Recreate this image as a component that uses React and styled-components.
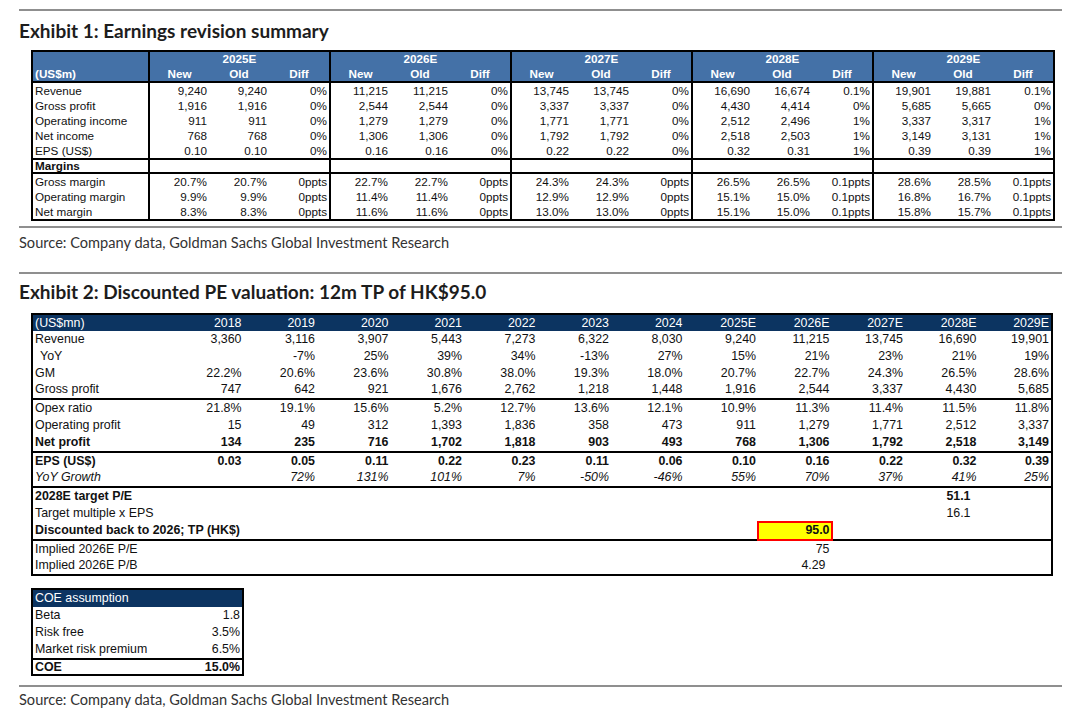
import React from 'react';
import styled, { createGlobalStyle } from 'styled-components';

const Global = createGlobalStyle`
  html, body { margin: 0; padding: 0; background: #fff; }
  body { font-family: "Liberation Sans", Arial, sans-serif; }
`;

const Page = styled.div`
  width: 1080px;
  height: 717px;
  box-sizing: border-box;
  padding: 9px 0 0 19px;
  display: flex;
  flex-direction: column;
  align-items: flex-start;
  overflow: hidden;
`;

const Rule = styled.div`
  width: 1043px;
  height: 2px;
  background: #8f8f8f;
  margin-top: ${p => p.$mt || 0}px;
`;

const Title = styled.h2`
  margin: ${p => p.$mt}px 0 0;
  font-family: Lato, "Open Sans", sans-serif;
  font-weight: 700;
  font-size: 19px;
  line-height: 22px;
  color: #1d1d1d;
`;

const Source = styled.div`
  margin-top: ${p => p.$mt}px;
  font-family: Lato, "Open Sans", sans-serif;
  font-size: 14.6px;
  line-height: 18px;
  color: #333;
`;

const Table = styled.table`
  border-collapse: collapse;
  table-layout: fixed;
  width: ${p => p.$w}px;
  margin: ${p => p.$mt}px 0 0 12px;
  border: 2px solid #000;
  font-family: "Liberation Sans", Arial, sans-serif;
  font-size: ${p => p.$fs}px;
  color: #111;
`;

const HeadCell = styled.th`
  background: ${p => (p.$navy ? '#0c3461' : '#4471a7')};
  color: #fff;
  font-weight: ${p => (p.$navy ? 400 : 700)};
  text-align: ${p => p.$align || 'center'};
  vertical-align: bottom;
  padding: 0 2px;
  height: ${p => p.$h}px;
  line-height: ${p => p.$h}px;
  white-space: nowrap;
  border-right: ${p => (p.$sep ? '2px solid #000' : 'none')};
  border-bottom: ${p => (p.$under ? '2px solid #000' : 'none')};
`;

const Cell = styled.td`
  padding: 0 ${p => p.$pr ?? 2}px 0 ${p => p.$pl ?? 2}px;
  height: ${p => p.$h}px;
  line-height: ${p => p.$h}px;
  white-space: nowrap;
  overflow: visible;
  text-align: ${p => (p.$label ? 'left' : 'right')};
  font-weight: ${p => (p.$bold ? 700 : 400)};
  font-style: ${p => (p.$italic ? 'italic' : 'normal')};
  border-right: ${p => (p.$sep ? '2px solid #000' : 'none')};
  border-top: ${p => (p.$top ? '2px solid #000' : 'none')};
  border-bottom: ${p => (p.$bottom ? '2px solid #000' : 'none')};
  background: ${p => (p.$hl ? '#ffff00' : 'transparent')};
  outline: ${p => (p.$hl ? '2px solid #ff0000' : 'none')};
  outline-offset: -1px;
`;

/* ---------- Exhibit 1 data ---------- */
const years1 = ['2025E', '2026E', '2027E', '2028E', '2029E'];
const rows1 = [
  ['Revenue', [['9,240', '9,240', '0%'], ['11,215', '11,215', '0%'], ['13,745', '13,745', '0%'], ['16,690', '16,674', '0.1%'], ['19,901', '19,881', '0.1%']]],
  ['Gross profit', [['1,916', '1,916', '0%'], ['2,544', '2,544', '0%'], ['3,337', '3,337', '0%'], ['4,430', '4,414', '0%'], ['5,685', '5,665', '0%']]],
  ['Operating income', [['911', '911', '0%'], ['1,279', '1,279', '0%'], ['1,771', '1,771', '0%'], ['2,512', '2,496', '1%'], ['3,337', '3,317', '1%']]],
  ['Net income', [['768', '768', '0%'], ['1,306', '1,306', '0%'], ['1,792', '1,792', '0%'], ['2,518', '2,503', '1%'], ['3,149', '3,131', '1%']]],
  ['EPS (US$)', [['0.10', '0.10', '0%'], ['0.16', '0.16', '0%'], ['0.22', '0.22', '0%'], ['0.32', '0.31', '1%'], ['0.39', '0.39', '1%']]],
];
const margins1 = [
  ['Gross margin', [['20.7%', '20.7%', '0ppts'], ['22.7%', '22.7%', '0ppts'], ['24.3%', '24.3%', '0ppts'], ['26.5%', '26.5%', '0.1ppts'], ['28.6%', '28.5%', '0.1ppts']]],
  ['Operating margin', [['9.9%', '9.9%', '0ppts'], ['11.4%', '11.4%', '0ppts'], ['12.9%', '12.9%', '0ppts'], ['15.1%', '15.0%', '0.1ppts'], ['16.8%', '16.7%', '0.1ppts']]],
  ['Net margin', [['8.3%', '8.3%', '0ppts'], ['11.6%', '11.6%', '0ppts'], ['13.0%', '13.0%', '0ppts'], ['15.1%', '15.0%', '0.1ppts'], ['15.8%', '15.7%', '0.1ppts']]],
];

const H1 = 15;

function Exhibit1Row({ label, groups }) {
  return (
    <tr>
      <Cell $label $sep $h={H1}>{label}</Cell>
      {groups.map((g, gi) =>
        g.map((v, i) => (
          <Cell key={`${gi}-${i}`} $h={H1} $sep={i === 2}>{v}</Cell>
        ))
      )}
    </tr>
  );
}

function Exhibit1() {
  return (
    <Table $w={1022} $mt={8} $fs={11.7}>
      <colgroup>
        <col style={{ width: 117 }} />
        {years1.map(y => (
          <React.Fragment key={y}>
            <col style={{ width: 60 }} />
            <col style={{ width: 60 }} />
            <col style={{ width: 61 }} />
          </React.Fragment>
        ))}
      </colgroup>
      <thead>
        <tr>
          <HeadCell rowSpan={2} $align="left" $sep $under $h={14}>(US$m)</HeadCell>
          {years1.map(y => (
            <HeadCell key={y} colSpan={3} $sep $h={14}>{y}</HeadCell>
          ))}
        </tr>
        <tr>
          {years1.map(y => (
            <React.Fragment key={y}>
              <HeadCell $under $h={H1}>New</HeadCell>
              <HeadCell $under $h={H1}>Old</HeadCell>
              <HeadCell $under $sep $h={H1}>Diff</HeadCell>
            </React.Fragment>
          ))}
        </tr>
      </thead>
      <tbody>
        {rows1.map(([l, g]) => (
          <Exhibit1Row key={l} label={l} groups={g} />
        ))}
        <tr>
          <Cell $label $bold $sep $top $bottom $h={12}>Margins</Cell>
          {years1.map(y => (
            <React.Fragment key={y}>
              <Cell $top $bottom $h={12} />
              <Cell $top $bottom $h={12} />
              <Cell $top $bottom $sep $h={12} />
            </React.Fragment>
          ))}
        </tr>
        {margins1.map(([l, g]) => (
          <Exhibit1Row key={l} label={l} groups={g} />
        ))}
      </tbody>
    </Table>
  );
}

/* ---------- Exhibit 2 data ---------- */
const years2 = ['2018', '2019', '2020', '2021', '2022', '2023', '2024', '2025E', '2026E', '2027E', '2028E', '2029E'];
const E = (n, v) => {
  const a = Array(12).fill('');
  a[n] = v;
  return a;
};
const rows2 = [
  { label: 'Revenue', vals: ['3,360', '3,116', '3,907', '5,443', '7,273', '6,322', '8,030', '9,240', '11,215', '13,745', '16,690', '19,901'] },
  { label: 'YoY', indent: true, vals: ['', '-7%', '25%', '39%', '34%', '-13%', '27%', '15%', '21%', '23%', '21%', '19%'] },
  { label: 'GM', vals: ['22.2%', '20.6%', '23.6%', '30.8%', '38.0%', '19.3%', '18.0%', '20.7%', '22.7%', '24.3%', '26.5%', '28.6%'] },
  { label: 'Gross profit', bottom: true, vals: ['747', '642', '921', '1,676', '2,762', '1,218', '1,448', '1,916', '2,544', '3,337', '4,430', '5,685'] },
  { label: 'Opex ratio', vals: ['21.8%', '19.1%', '15.6%', '5.2%', '12.7%', '13.6%', '12.1%', '10.9%', '11.3%', '11.4%', '11.5%', '11.8%'] },
  { label: 'Operating profit', vals: ['15', '49', '312', '1,393', '1,836', '358', '473', '911', '1,279', '1,771', '2,512', '3,337'] },
  { label: 'Net profit', bold: true, bottom: true, vals: ['134', '235', '716', '1,702', '1,818', '903', '493', '768', '1,306', '1,792', '2,518', '3,149'] },
  { label: 'EPS (US$)', bold: true, vals: ['0.03', '0.05', '0.11', '0.22', '0.23', '0.11', '0.06', '0.10', '0.16', '0.22', '0.32', '0.39'] },
  { label: 'YoY Growth', italic: true, bottom: true, vals: ['', '72%', '131%', '101%', '7%', '-50%', '-46%', '55%', '70%', '37%', '41%', '25%'] },
  { label: '2028E target P/E', bold: true, vals: E(10, '51.1'), pr: 8 },
  { label: 'Target multiple x EPS', vals: E(10, '16.1'), pr: 8 },
  { label: 'Discounted back to 2026; TP (HK$)', bold: true, bottom: true, vals: E(8, '95.0'), hl: 8 },
  { label: 'Implied 2026E P/E', vals: E(8, '75') },
  { label: 'Implied 2026E P/B', vals: E(8, '4.29'), pr: 6 },
];

const H2 = 16.8;

function Exhibit2() {
  return (
    <Table $w={1022} $mt={10} $fs={12.4}>
      <colgroup>
        <col style={{ width: 138 }} />
        {years2.map(y => <col key={y} />)}
      </colgroup>
      <thead>
        <tr>
          <HeadCell $navy $align="left" $h={16}>(US$mn)</HeadCell>
          {years2.map(y => (
            <HeadCell key={y} $navy $align="right" $h={16}>{y}</HeadCell>
          ))}
        </tr>
      </thead>
      <tbody>
        {rows2.map(r => (
          <tr key={r.label}>
            <Cell $label $h={H2} $pl={r.indent ? 7 : 2} $bold={r.bold} $italic={r.italic} $bottom={r.bottom}>
              {r.label}
            </Cell>
            {r.vals.map((v, i) => (
              <Cell
                key={i}
                $h={H2}
                $bold={r.bold}
                $italic={r.italic}
                $bottom={r.bottom}
                $hl={r.hl === i}
                $pr={v && r.pr ? r.pr : 2}
              >
                {v}
              </Cell>
            ))}
          </tr>
        ))}
      </tbody>
    </Table>
  );
}

/* ---------- COE ---------- */
const coe = [
  ['Beta', '1.8'],
  ['Risk free', '3.5%'],
  ['Market risk premium', '6.5%'],
];

function CoeTable() {
  return (
    <Table $w={213} $mt={12} $fs={12.4}>
      <colgroup>
        <col style={{ width: 150 }} />
        <col />
      </colgroup>
      <thead>
        <tr>
          <HeadCell $navy $align="left" colSpan={2} $h={17}>COE assumption</HeadCell>
        </tr>
      </thead>
      <tbody>
        {coe.map(([l, v]) => (
          <tr key={l}>
            <Cell $label $h={17}>{l}</Cell>
            <Cell $h={17}>{v}</Cell>
          </tr>
        ))}
        <tr>
          <Cell $label $bold $top $h={14}>COE</Cell>
          <Cell $bold $top $h={14}>15.0%</Cell>
        </tr>
      </tbody>
    </Table>
  );
}

export default function App() {
  return (
    <>
      <Global />
      <Page>
        <Rule />
        <Title $mt={9}>Exhibit 1: Earnings revision summary</Title>
        <Exhibit1 />
        <Rule $mt={5} />
        <Source $mt={6}>Source: Company data, Goldman Sachs Global Investment Research</Source>
        <Rule $mt={20} />
        <Title $mt={7}>Exhibit 2: Discounted PE valuation: 12m TP of HK$95.0</Title>
        <Exhibit2 />
        <CoeTable />
        <Rule $mt={9} />
        <Source $mt={4}>Source: Company data, Goldman Sachs Global Investment Research</Source>
      </Page>
    </>
  );
}
